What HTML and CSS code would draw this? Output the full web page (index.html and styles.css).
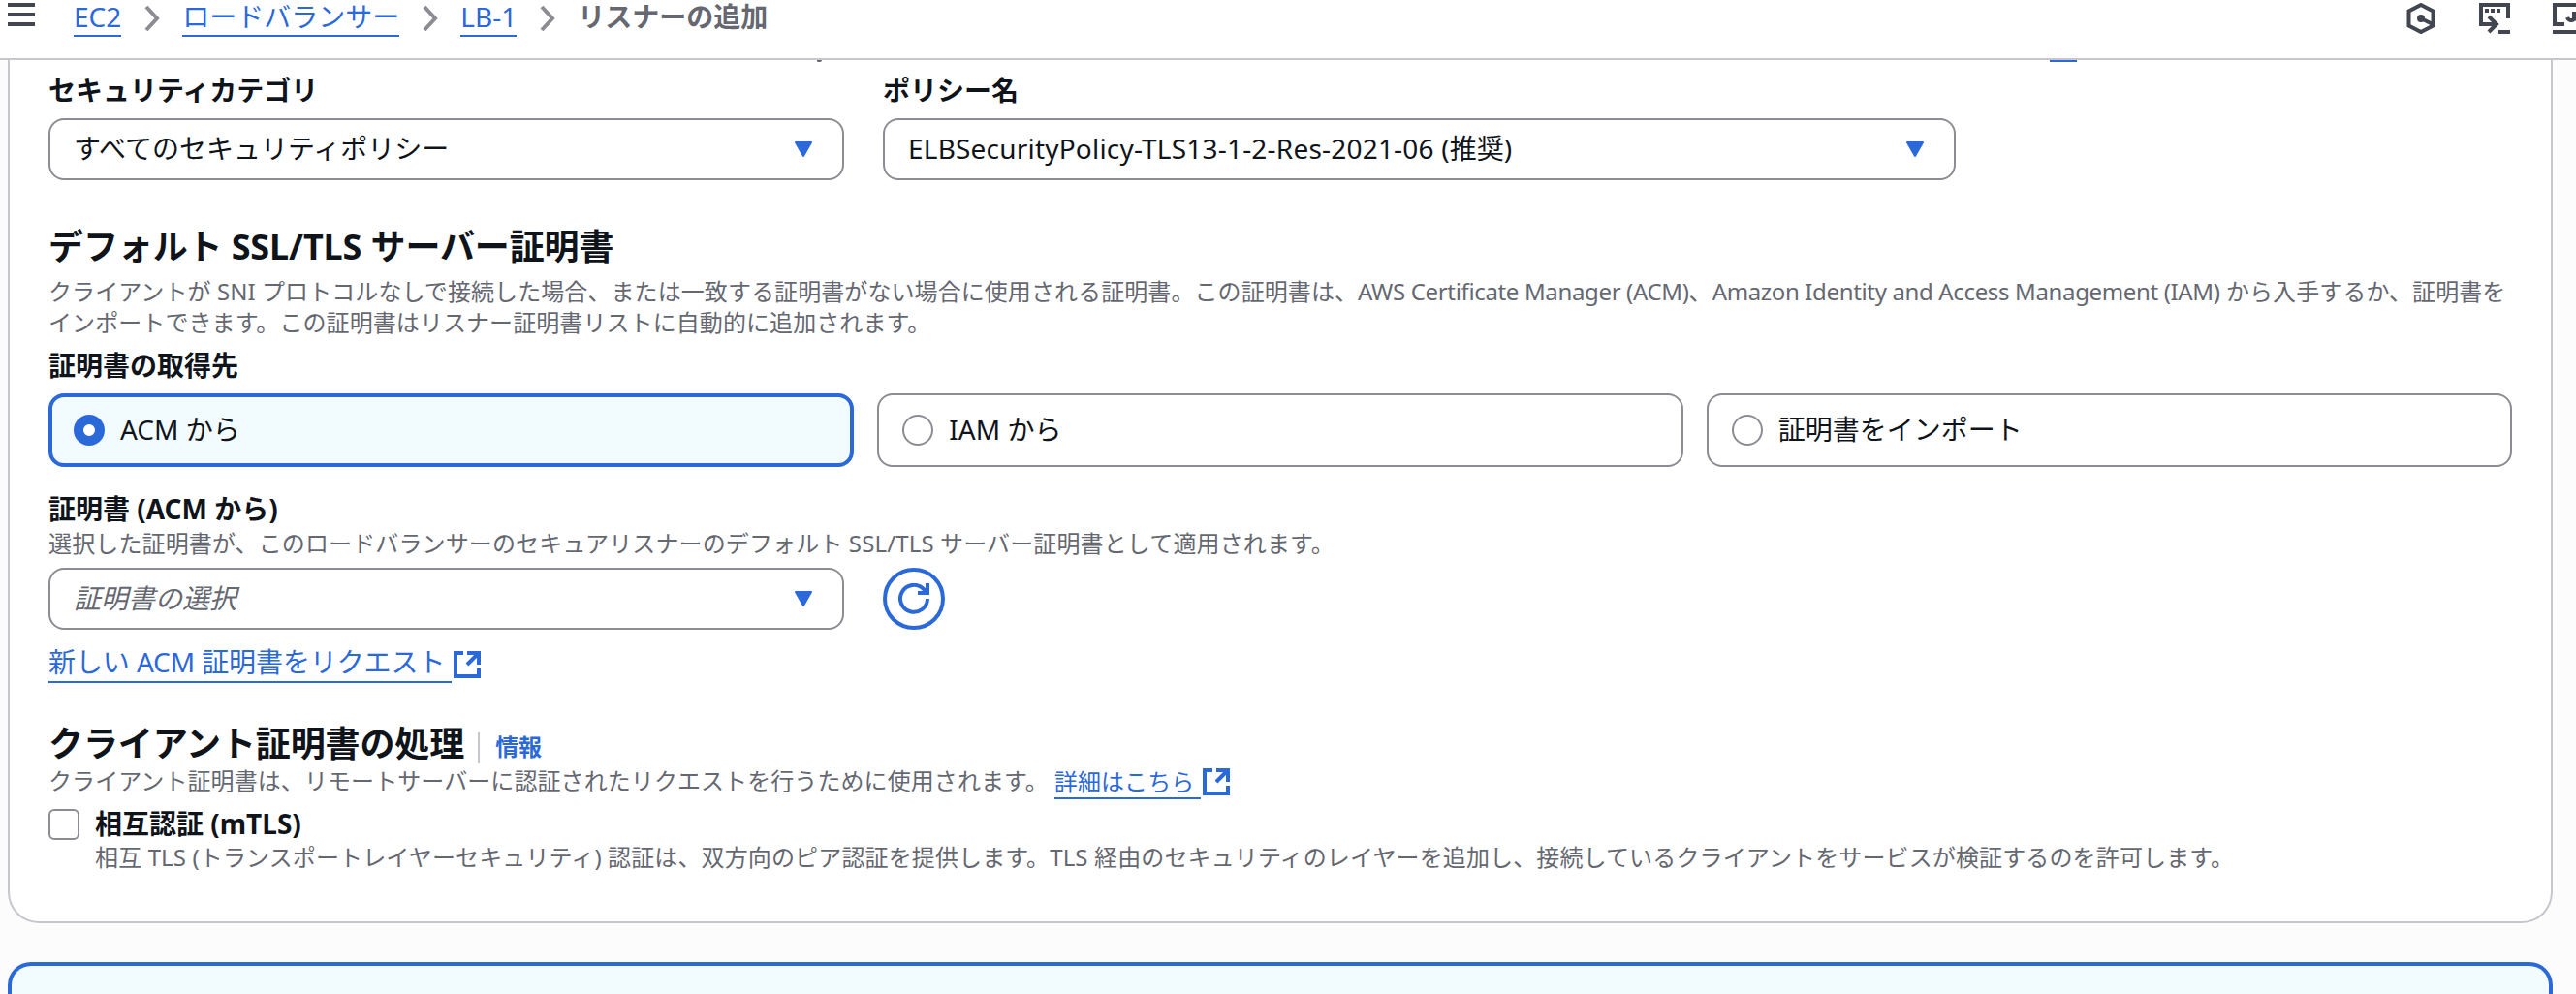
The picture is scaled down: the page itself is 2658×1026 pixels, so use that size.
FILE: index.html
```html
<!DOCTYPE html>
<html lang="ja">
<head>
<meta charset="utf-8">
<title>リスナーの追加</title>
<link rel="stylesheet" href="styles.css">
</head>
<body>
<header class="topbar">
  <svg class="menu" viewBox="0 0 28 26"><path d="M0 2h28M0 12h28M0 22h28"/></svg>
  <nav class="crumbs">
    <a>EC2</a>
    <svg class="chev" viewBox="0 0 18 28"><path d="M3 2l11 12L3 26"/></svg>
    <a>ロードバランサー</a>
    <svg class="chev" viewBox="0 0 18 28"><path d="M3 2l11 12L3 26"/></svg>
    <a>LB-1</a>
    <svg class="chev" viewBox="0 0 18 28"><path d="M3 2l11 12L3 26"/></svg>
    <span class="current">リスナーの追加</span>
  </nav>
  <div class="tools">
    <svg viewBox="0 0 32 32"><path d="M16 2l12.500 6.500v15L16 30 3.500 23.500v-15z"/><path d="M16 16l12 6"/><circle cx="16" cy="16" r="4" class="solid"/></svg>
    <svg viewBox="0 0 32 32"><path d="M30 16V2H2v20h14"/><path d="M10 14l8 8-8 8"/><path d="M20 30h12"/><path d="M6 8h4M12 8h4M18 8h4"/></svg>
    <svg viewBox="0 0 32 32"><path d="M12 22H2V2h28v8"/><path d="M0 30h32"/><path d="M15 15c1 3 4 4 7 2M22 9v6l6 4"/></svg>
  </div>
</header>
<main class="content">
  <section class="card">
    <div class="scrolled"><span class="tail"></span><svg class="ext" viewBox="0 0 28 28"><path d="M10 2H2v24h24v-8"/></svg></div>
    <div class="row">
      <div class="field category">
        <label>セキュリティカテゴリ</label>
        <div class="select"><span>すべてのセキュリティポリシー</span><svg class="caret" viewBox="0 0 20 16"><path d="M2 1h16L10 15z"/></svg></div>
      </div>
      <div class="field policy">
        <label>ポリシー名</label>
        <div class="select"><span><i class="value">ELBSecurityPolicy-TLS13-1-2-Res-2021-06 (</i>推奨)</span><svg class="caret" viewBox="0 0 20 16"><path d="M2 1h16L10 15z"/></svg></div>
      </div>
    </div>

    <h2>デフォルト SSL/TLS サーバー証明書</h2>
    <p class="desc intro">クライアントが SNI プロトコルなしで接続した場合、または一致する証明書がない場合に使用される証明書。この証明書は、<i class="lat">AWS Certificate Manager (ACM)</i>、<i class="lat">Amazon Identity and Access Management (IAM)</i> から入手するか、証明書を<br>インポートできます。この証明書はリスナー証明書リストに自動的に追加されます。</p>
    <div class="label source">証明書の取得先</div>
    <div class="tiles">
      <div class="tile selected"><span class="radio"></span><span class="text">ACM から</span></div>
      <div class="tile"><span class="radio"></span><span class="text">IAM から</span></div>
      <div class="tile"><span class="radio"></span><span class="text">証明書をインポート</span></div>
    </div>

    <div class="label cert">証明書 (ACM から)</div>
    <p class="desc wide">選択した証明書が、このロードバランサーのセキュアリスナーのデフォルト SSL/TLS サーバー証明書として適用されます。</p>
    <div class="row picker">
      <div class="select category placeholder"><span>証明書の選択</span><svg class="caret" viewBox="0 0 20 16"><path d="M2 1h16L10 15z"/></svg></div>
      <button class="refresh"><svg viewBox="0 0 32 32"><path d="M30 16a14 14 0 1 1-4-10l3 4"/><path d="M30 0v10H20"/></svg></button>
    </div>
    <div class="request"><a>新しい ACM 証明書をリクエスト </a><svg class="ext" viewBox="0 0 28 28"><path d="M10 2H2v24h24v-8"/><path d="M14 2h12v12M26 2L14 14"/></svg></div>

    <div class="heading"><h2>クライアント証明書の処理</h2><a class="info">情報</a></div>
    <p class="desc more"><span>クライアント証明書は、リモートサーバーに認証されたリクエストを行うために使用されます。</span><a>詳細はこちら </a><svg class="ext" viewBox="0 0 28 28"><path d="M10 2H2v24h24v-8"/><path d="M14 2h12v12M26 2L14 14"/></svg></p>
    <div class="check">
      <span class="box"></span>
      <div>
        <div class="label">相互認証 (mTLS)</div>
        <p class="desc wide">相互 TLS (トランスポートレイヤーセキュリティ) 認証は、双方向のピア認証を提供します。TLS 経由のセキュリティのレイヤーを追加し、接続しているクライアントをサービスが検証するのを許可します。</p>
      </div>
    </div>
  </section>
  <section class="notice"></section>
</main>
</body>
</html>
```
FILE: styles.css
```css
* { box-sizing: border-box; }
body {
  margin: 0; height: 1026px; overflow: hidden;
  background: #fcfcfd; color: #0f141a;
  font: 28px/40px "Noto Sans", "Noto Sans CJK JP", sans-serif;
  white-space: nowrap;
}
h2, p { margin: 0; }
i { font-style: normal; }
svg { display: block; flex: none; fill: none; stroke: currentColor; stroke-width: 4; }
a { color: #2b69d9; }

.topbar {
  height: 62px; display: flex; align-items: flex-start;
  background: #fff; border-bottom: 2px solid #c6c6cd; color: #424650; overflow: hidden;
}
.menu { width: 28px; height: 26px; margin: 3px 0 0 8px; }
.crumbs { display: flex; align-items: flex-start; margin-left: 40px; height: 38px; }
.crumbs a { border-bottom: 2px solid; height: 38px; line-height: 35px; }
.crumbs span { line-height: 35px; }
.chev { width: 18px; height: 28px; margin: 5px 22px 0 23px; color: #8c8c94; }
.current { font-weight: 700; color: #656871; }
.tools { display: flex; gap: 44px; margin: 3px -8px 0 auto; }
.tools svg { width: 32px; height: 32px; }
.solid { fill: currentColor; stroke: none; }

.content { padding: 0 24px 0 8px; }
.card {
  height: 891px; padding: 0 40px; background: #fff;
  border: 2px solid #c6c6cd; border-top: 0; border-radius: 0 0 32px 32px;
}
/* last pixels of the line that has scrolled under the top bar */
.scrolled { display: flex; align-items: flex-end; height: 2px; margin-bottom: 9px; overflow: hidden; color: #2b69d9; }
.tail { width: 5px; height: 2px; margin: 0 1267px 0 793px; background: #656871; border-radius: 0 0 3px 2px; }
.row { display: flex; gap: 40px; }
.category { width: 821px; }
.policy { width: 1107px; }
label, .label { display: block; font-weight: 700; }
.select {
  height: 64px; display: flex; align-items: center; justify-content: space-between;
  padding: 0 30px 0 24px; border: 2px solid #8c8c94; border-radius: 16px;
}
.select span, .text { margin-top: -3px; }
.field .select { margin-top: 9px; }
.value { letter-spacing: .2px; }
.caret { width: 20px; height: 16px; color: #2b69d9; fill: currentColor; stroke-width: 2; stroke-linejoin: round; }
h2 { font-size: 36px; line-height: 48px; font-weight: 700; letter-spacing: -.12px; }
.row + h2 { margin-top: 45px; }
.desc { font-size: 24px; line-height: 32px; letter-spacing: .08px; color: #656871; }
.desc .lat { letter-spacing: -.35px; }
.wide { letter-spacing: .13px; }
.intro { margin-top: 6px; }
.tiles { display: grid; grid-template-columns: repeat(3, 1fr); gap: 24px; }
.tile {
  height: 76px; display: flex; align-items: center; gap: 16px;
  padding: 0 24px; border: 2px solid #8c8c94; border-radius: 16px;
}
.radio { width: 32px; height: 32px; border: 2px solid #8c8c94; border-radius: 50%; }
.selected { padding: 0 22px; border: 4px solid #2b69d9; background: #f2fbfe; }
.selected .radio { border: 10px solid #2b69d9; background: #fff; }
.placeholder { color: #656871; }
.placeholder span { font-style: italic; }
.refresh {
  width: 64px; height: 64px; padding: 12px; border: 4px solid; border-radius: 50%;
  background: #fff; color: #2b69d9;
}
.refresh svg { width: 32px; height: 32px; }
.source { margin: 8px 0 9px; }
.cert { margin-top: 23px; }
.picker { margin-top: 9px; }
.request { display: flex; margin-top: 13px; gap: 2px; color: #2b69d9; letter-spacing: -.1px; }
.request a, .more a { border-bottom: 2px solid; white-space: pre; }
.ext { width: 28px; height: 28px; }
.request .ext { margin-top: 9px; }
.heading { display: flex; height: 46px; margin-top: 39px; }
.info { height: 32px; margin: 12px 0 0 14px; padding-left: 16px; border-left: 2px solid #c6c6cd; font-size: 24px; line-height: 30px; font-weight: 700; }
.more { display: flex; }
.more a { margin-left: 6px; line-height: 33px; }
.more .ext { margin: 3px 0 0 2px; color: #2b69d9; }
.check { display: flex; gap: 16px; margin-top: 10px; }
.check .label { margin-top: -4px; line-height: 38px; }
.box { width: 32px; height: 32px; border: 2px solid #8c8c94; border-radius: 6px; }
.notice { height: 60px; margin-top: 40px; border: 4px solid #2b69d9; border-bottom: 0; border-radius: 24px 24px 0 0; background: #f2fbfe; }
```
